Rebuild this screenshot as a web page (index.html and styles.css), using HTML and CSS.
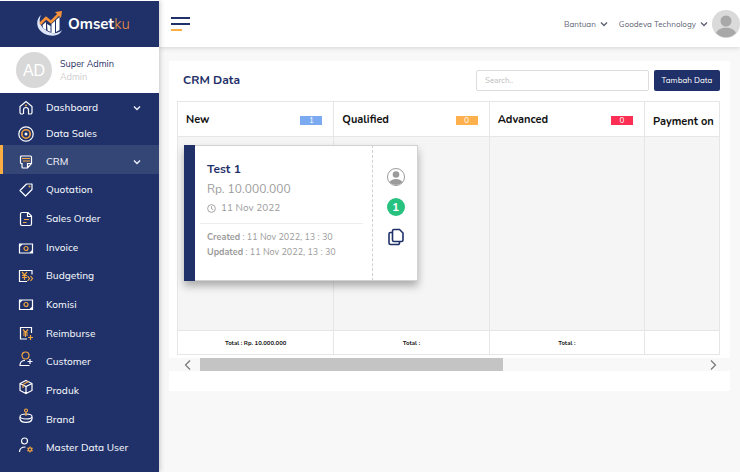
FILE: index.html
```html
<!DOCTYPE html>
<html lang="id">
<head>
<meta charset="utf-8">
<meta name="viewport" content="width=device-width, initial-scale=1">
<title>Omsetku - CRM</title>
<link rel="stylesheet" href="styles.css">
</head>
<body>
<div class="app">
  <aside class="sidebar">
    <a class="brand" href="#">
      <svg width="28" height="26" viewBox="0 0 28 26" aria-hidden="true">
        <path d="M5 4C-1 9 0 19 9 23c7 3 15 2 17-4-4 4-10 4-15 1C4 16 2 10 5 4z" fill="#dfe6fb"/>
        <path d="M6.500 14l3.500-3v8l-3-2zM11 13l3.500 2v6l-3-1.500zM15.500 13l3.500-3v12h-3.500zM20 9l3.500-3v13l-3.500 2z" fill="#fff"/>
        <path d="M4 13l6-6 5 4 8-8" fill="none" stroke="#f7923a" stroke-width="2.600"/>
        <path d="M19 1l7-1-1 7z" fill="#f7923a"/>
      </svg>
      <span class="brand-name">Omset<span class="brand-tail">ku</span></span>
    </a>
    <div class="profile">
      <span class="initials">AD</span>
      <div>
        <div class="profile-name">Super Admin</div>
        <div class="profile-role">Admin</div>
      </div>
    </div>
    <nav class="nav">
      <a class="nav-item nav-first" href="#">
        <svg class="icon" viewBox="0 0 16 16"><path d="M5 14H3.500A1.500 1.500 0 0 1 2 12.500V6.500L8 1.500l6 5v6a1.500 1.500 0 0 1-1.500 1.500H10.500v-4a2.500 2.500 0 0 0-5 0v4"/><circle class="gold-fill" cx="8" cy="5.500" r="1"/></svg>
        <span class="label">Dashboard</span>
        <svg class="chevron" viewBox="0 0 8 8"><path d="M1 2.500l3 3 3-3"/></svg>
      </a>
      <a class="nav-item nav-second" href="#">
        <svg class="icon" viewBox="0 0 16 16"><circle cx="8" cy="8" r="7.200"/><circle class="gold" cx="8" cy="8" r="4.200" stroke-width="1.600"/><circle class="white-fill" cx="8" cy="8" r="1.500"/></svg>
        <span class="label">Data Sales</span>
      </a>
      <a class="nav-item active" href="#">
        <svg class="icon" viewBox="0 0 16 16"><path d="M3.500 2h9a1 1 0 0 1 1 1v6.500L9.500 14H5a1 1 0 0 1-1-1v-3.500H3.500a1 1 0 0 1-1-1V3a1 1 0 0 1 1-1zM9.500 14V9.500h4"/><path class="gold" d="M4 4.500h8M5 7h7"/></svg>
        <span class="label">CRM</span>
        <svg class="chevron" viewBox="0 0 8 8"><path d="M1 2.500l3 3 3-3"/></svg>
      </a>
      <a class="nav-item" href="#">
        <svg class="icon" viewBox="0 0 16 16"><path d="M8.500 2H14v5.500L7.500 14 2 8.500z" stroke-linejoin="round"/><circle class="gold-fill" cx="11.500" cy="4.500" r="1"/></svg>
        <span class="label">Quotation</span>
      </a>
      <a class="nav-item" href="#">
        <svg class="icon" viewBox="0 0 16 16"><path d="M4 1.500H10L13.500 5v8a1.500 1.500 0 0 1-1.500 1.500H4A1.500 1.500 0 0 1 2.500 13V3A1.500 1.500 0 0 1 4 1.500zM9.500 1.500V5.500h4"/><path class="gold" d="M6 8.500h5M5 11.500h3.500"/></svg>
        <span class="label">Sales Order</span>
      </a>
      <a class="nav-item" href="#">
        <svg class="icon" viewBox="0 0 16 16"><path d="M1.500 4h13v9h-13zM1.500 6.500L4 4M12 13l2.500-2.500"/><circle class="gold" cx="8" cy="8.500" r="2"/></svg>
        <span class="label">Invoice</span>
      </a>
      <a class="nav-item" href="#">
        <svg class="icon" viewBox="0 0 16 16"><path d="M14 6.500V2.500H1.500v11H9"/><path class="gold" d="M4 4l2.500 3L9 4M6.500 7v5M4 7.500h5M4 9.500h5M9.500 8l2 2.500-2 2.500M12.500 8l2 2.500-2 2.500"/></svg>
        <span class="label">Budgeting</span>
      </a>
      <a class="nav-item" href="#">
        <svg class="icon" viewBox="0 0 16 16"><path d="M1.500 3h13v9.500h-13zM1.500 5.500L4 3M12 12.500l2.500-2.500"/><circle class="gold" cx="8" cy="7.500" r="2"/></svg>
        <span class="label">Komisi</span>
      </a>
      <a class="nav-item" href="#">
        <svg class="icon" viewBox="0 0 16 16"><path d="M13.500 7V1.500h-11V13H9"/><path class="gold" d="M5 3.500l2.500 3 2.500-3M7.500 6.500v4.500M5 7h5M5 9h5M10 11.500h5M12.500 9v5"/></svg>
        <span class="label">Reimburse</span>
      </a>
      <a class="nav-item raised" href="#">
        <svg class="icon" viewBox="0 0 16 16"><circle class="gold" cx="7.500" cy="4.500" r="3.500"/><path d="M7 9.500c-4 0-5 2-5 5h9.500M9.500 10.500h5M12 8v5"/></svg>
        <span class="label">Customer</span>
      </a>
      <a class="nav-item raised" href="#">
        <svg class="icon" viewBox="0 0 16 16"><path d="M8 1.500L14 4.500v7L8 14.500 2 11.500v-7zM2 4.500l6 3 6-3M8 7.500v7"/><path class="gold" d="M5 6V9M5 5.500l5.500-3"/></svg>
        <span class="label">Produk</span>
      </a>
      <a class="nav-item raised" href="#">
        <svg class="icon" viewBox="0 0 16 16"><ellipse cx="8" cy="8.500" rx="6" ry="2.500"/><path d="M2 9v2c1 4.500 11 4.500 12 0V9"/><circle class="gold" cx="8" cy="2.500" r="1.500"/><path class="gold" d="M8 4V8"/></svg>
        <span class="label">Brand</span>
      </a>
      <a class="nav-item raised" href="#">
        <svg class="icon" viewBox="0 0 16 16"><circle cx="6.500" cy="4" r="3"/><path d="M1.500 15c0-4 2-5 6-5"/><circle class="gold" cx="12" cy="12.500" r="1.700"/><path class="gold" d="M12 9.500v1.300M12 14.200v1.300M9.400 11l1.100.6M13.500 13.400l1.100.6M9.400 14l1.100-.6M13.500 11.600l1.100-.6"/></svg>
        <span class="label">Master Data User</span>
      </a>
    </nav>
  </aside>

  <div class="content">
    <header class="topbar">
      <button class="menu-button" type="button" aria-label="Menu"><span></span><span></span><span></span></button>
      <div class="account">
        <a class="account-link" href="#">Bantuan <svg class="chevron" viewBox="0 0 8 8"><path d="M1 2.500l3 3 3-3"/></svg></a>
        <a class="account-link" href="#">Goodeva Technology <svg class="chevron" viewBox="0 0 8 8"><path d="M1 2.500l3 3 3-3"/></svg></a>
        <svg class="avatar" viewBox="0 0 28 28"><circle cx="14" cy="14" r="14" fill="#dadada"/><circle cx="14" cy="11" r="5.500" fill="#a8a8a8"/><path d="M4 23c3-7 17-7 20 0a14 14 0 0 1-20 0z" fill="#a8a8a8"/></svg>
      </div>
    </header>

    <main class="panel">
      <div class="toolbar">
        <h1>CRM Data</h1>
        <input class="search" type="search" placeholder="Search.." aria-label="Search">
        <button class="add-button" type="button">Tambah Data</button>
      </div>

      <div class="board">
        <section class="column">
          <header class="column-head"><h2>New</h2><span class="count blue">1</span></header>
          <div class="column-body">
            <article class="card">
              <div class="card-main">
                <h3>Test 1</h3>
                <div class="amount">Rp. 10.000.000</div>
                <div class="date"><svg viewBox="0 0 10 10"><circle cx="5" cy="5" r="4.300"/><path d="M5 2.500V5.300l1.800 1"/></svg>11 Nov 2022</div>
                <div class="stamps">
                  <div><b>Created</b> : 11 Nov 2022, 13 : 30</div>
                  <div><b>Updated</b> : 11 Nov 2022, 13 : 30</div>
                </div>
              </div>
              <div class="card-side">
                <svg width="18" height="18" viewBox="0 0 18 18"><circle cx="9" cy="9" r="8.500" fill="#fff" stroke="#9b9b9b"/><circle cx="9" cy="6.500" r="3.300" fill="#9b9b9b"/><path d="M2.500 14c2.500-4 10.500-4 13 0a8.500 8.500 0 0 1-13 0z" fill="#9b9b9b"/></svg>
                <span class="tally">1</span>
                <button class="copy" type="button" aria-label="Copy"><svg width="18" height="18" viewBox="0 0 18 18"><path d="M7 1.500h5.500L16 5v7a1.500 1.500 0 0 1-1.500 1.500H7A1.500 1.500 0 0 1 5.500 12V3A1.500 1.500 0 0 1 7 1.500zM5 4.500H3.500A1.500 1.500 0 0 0 2 6v9a1.500 1.500 0 0 0 1.500 1.500H11a1.500 1.500 0 0 0 1.500-1.500V14"/></svg></button>
              </div>
            </article>
          </div>
          <footer class="column-total">Total : Rp. 10.000.000</footer>
        </section>
        <section class="column">
          <header class="column-head"><h2>Qualified</h2><span class="count orange">0</span></header>
          <div class="column-body"></div>
          <footer class="column-total">Total :</footer>
        </section>
        <section class="column">
          <header class="column-head"><h2>Advanced</h2><span class="count red">0</span></header>
          <div class="column-body"></div>
          <footer class="column-total">Total :</footer>
        </section>
        <section class="column">
          <header class="column-head last"><h2>Payment on</h2></header>
          <div class="column-body"></div>
          <footer class="column-total"></footer>
        </section>
      </div>

      <div class="scroller">
        <button type="button" aria-label="Scroll left"><svg viewBox="0 0 12 12"><path d="M8 1.500L3.500 6 8 10.500"/></svg></button>
        <div class="track"><div class="thumb"></div></div>
        <button type="button" aria-label="Scroll right"><svg viewBox="0 0 12 12"><path d="M4 1.500L8.500 6 4 10.500"/></svg></button>
      </div>
    </main>
  </div>
</div>
</body>
</html>
```
FILE: styles.css
```css
* { box-sizing: border-box; }
body {
  margin: 0;
  background: #f8f8f8;
  font-family: Nunito, Lato, sans-serif;
  font-size: 11px;
  color: #111;
}
h1, h2, h3 { margin: 0; }
a { color: inherit; text-decoration: none; }
button { padding: 0; border: 0; background: none; font: inherit; cursor: pointer; }
svg { flex: none; fill: none; }

.app { display: flex; min-height: 100vh; }

/* Sidebar */
.sidebar {
  display: flex;
  flex-direction: column;
  flex: none;
  width: 159px;
  border-top: 1px solid #fff;
  background: #1f3168;
  box-shadow: 1px 0 5px rgba(0, 0, 0, .2);
  z-index: 2;
}
.brand { display: flex; align-items: center; gap: 4px; height: 46px; padding-left: 36px; color: #fff; }
.brand-name { font-size: 15px; font-weight: 700; }
.brand-tail { color: #e88e42; font-weight: 300; }
.profile { display: flex; align-items: center; gap: 8px; height: 46px; padding-left: 16px; background: #fff; line-height: 13px; }
.initials {
  display: flex;
  align-items: center;
  justify-content: center;
  width: 36px;
  height: 36px;
  border-radius: 50%;
  background: #d8d8d8;
  color: #fff;
  font-family: "Liberation Sans", sans-serif;
  font-size: 16px;
}
.profile-name, .profile-role { font-family: Mulish, Muli, Nunito, Lato, sans-serif; font-size: 9px; }
.profile-name { color: #1f3168; }
.profile-role { color: #ccc; }

.nav {
  display: flex;
  flex-direction: column;
  flex: 1;
  padding-bottom: 12px;
  color: #eef0f7;
  font-family: Mulish, Muli, Nunito, Lato, sans-serif;
  font-size: 10px;
  font-weight: 500;
}
.nav-item {
  display: flex;
  flex: 1;
  align-items: center;
  gap: 12px;
  min-height: 0;
  padding: 5px 18px 0 15px;
  border-left: 3px solid transparent;
}
.nav-first { flex: 0 0 30px; padding-top: 0; }
.nav-second { flex: 0 0 22px; padding-top: 0; }
.label { flex: 1; line-height: 14px; }
.active { border-color: #fbae42; background: #344676; }
.raised .icon { margin-bottom: 7px; }
.icon { width: 16px; height: 16px; stroke: #fff; stroke-width: 1.2; }
.gold { stroke: #f5a640; }
.gold-fill { fill: #f5a640; stroke: none; }
.white-fill { fill: #fff; stroke: none; }
.chevron { width: 8px; height: 8px; stroke: currentColor; stroke-width: 1.4; }

/* Top bar */
.content { flex: 1; min-width: 0; }
.topbar {
  display: flex;
  align-items: center;
  justify-content: space-between;
  height: 47px;
  padding-left: 12px;
  background: #fff;
  box-shadow: 0 1px 5px rgba(0, 0, 0, .15);
}
.menu-button { display: grid; gap: 4px; }
.menu-button span { width: 19px; height: 2px; background: #1f3168; }
.menu-button span:last-child { width: 11px; background: #fbae42; }
.account { display: flex; align-items: center; gap: 11px; color: #5f6575; font-family: Mulish, Muli, Nunito, Lato, sans-serif; font-size: 8px; }
.account-link { display: flex; align-items: center; gap: 4px; }
.account-link + .avatar { margin-left: -7px; }
.avatar { width: 28px; height: 28px; }

/* Panel */
.panel { margin: 14px 10px 0; padding-bottom: 20px; background: #fff; }
.toolbar { display: flex; align-items: center; gap: 5px; height: 40px; padding: 0 10px 2px 14px; }
h1 { flex: 1; color: #1f3168; font-size: 12px; }
.search {
  width: 173px;
  height: 21px;
  padding: 0 8px;
  border: 1px solid #ddd;
  border-radius: 2px;
  background: #fff;
  font: inherit;
  font-size: 8px;
}
.search::placeholder { color: #bbb; }
.add-button { width: 66px; height: 21px; border-radius: 2px; background: #1f3168; color: #fff; font-family: Mulish, Muli, Nunito, Lato, sans-serif; font-size: 8px; }

.board {
  display: grid;
  grid-template-columns: 29fr 29fr 29fr 14fr;
  margin: 0 10px 3px 8px;
  border: 1px solid #e6e6e6;
}
.column { min-width: 0; }
.column + .column { border-left: 1px solid #e6e6e6; }
.column-head { display: flex; align-items: center; justify-content: space-between; height: 34px; padding: 0 11px 0 8px; }
.column-head.last { padding: 4px 0 0 8px; white-space: nowrap; }
h2 { font-size: 11px; }
.count { width: 22px; height: 9px; margin-top: 2px; color: #fff; font-size: 8px; line-height: 10px; text-align: center; }
.blue { background: #7caaf0; }
.orange { background: #fdb04b; }
.red { background: #fb2e54; }
.column-body { height: 195px; padding: 8px 0 0 6px; border: solid #e6e6e6; border-width: 1px 0; background: #f5f5f5; }
.column-total { height: 23px; font-size: 6px; font-weight: 700; line-height: 24px; text-align: center; }

/* Card */
.card {
  position: relative;
  z-index: 1;
  display: flex;
  width: 234px;
  height: 136px;
  background: #fff;
  box-shadow: 0 5px 8px rgba(0, 0, 0, .3), inset 0 0 0 1px #d2d2d2;
  color: #9b9b9b;
}
.card::before { content: ""; width: 11px; background: #1f3168; }
.card-main { flex: 1; padding: 16px 9px 0 5px; }
.card-main > * { padding-left: 7px; }
h3 { color: #1f3168; font-size: 12px; line-height: 16px; }
.amount { font-size: 12px; line-height: 24px; }
.date { display: flex; align-items: center; gap: 5px; font-size: 10px; line-height: 14px; }
.date svg { width: 9px; height: 9px; stroke: #9b9b9b; }
.stamps { margin-top: 8px; padding-top: 6px; border-top: 1px solid #eee; font-size: 9px; line-height: 15px; }
.card-side {
  display: flex;
  flex-direction: column;
  align-items: center;
  gap: 12px;
  width: 46px;
  padding-top: 23px;
  border-left: 1px dashed #d0d0d0;
}
.tally { width: 18px; height: 18px; border-radius: 50%; background: #27c27f; color: #fff; font-size: 12px; font-weight: 700; line-height: 18px; text-align: center; }
.copy { height: 18px; stroke: #1f3168; stroke-width: 1.6; }

/* Horizontal scroll bar */
.scroller { display: flex; height: 13px; background: #f8f8f8; }
.scroller button { display: flex; align-items: center; justify-content: flex-end; width: 31px; padding-right: 6px; }
.scroller button:last-child { width: 34px; padding-right: 11px; }
.scroller svg { width: 12px; height: 12px; stroke: #777; stroke-width: 1.2; }
.track { flex: 1; }
.thumb { width: 61%; height: 100%; background: #c4c4c4; }
```
